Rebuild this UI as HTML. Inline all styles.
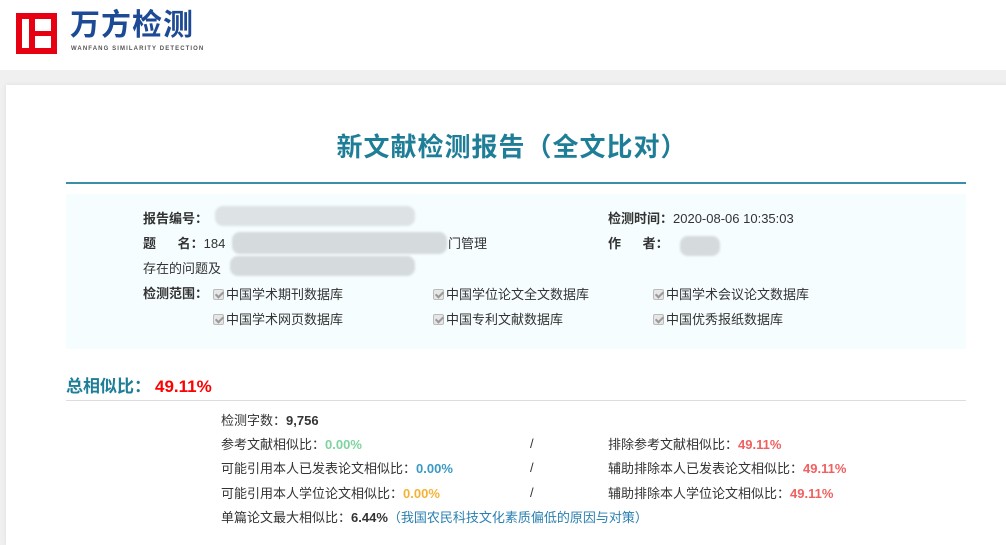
<!DOCTYPE html>
<html><head><meta charset="utf-8"><style>
*{margin:0;padding:0;box-sizing:border-box}
body{width:1006px;height:535px;overflow:hidden;background:#f0f0f0;font-family:"Liberation Sans","Noto Sans CJK SC",sans-serif;font-size:13px;color:#333;position:relative}
.hdr{position:absolute;left:0;top:0;width:1006px;height:70px;background:#fff}
.card{position:absolute;left:6px;top:85px;width:1010px;height:460px;background:#fff;box-shadow:0 0 4px #ddd}
.a{position:absolute;white-space:nowrap}
.b{font-weight:bold}
.cb{display:inline-block;width:11px;height:11px;border:1px solid #bbb;background:#e6e6e6;border-radius:2px;vertical-align:-1px;margin-right:2px;position:relative}
.cb:after{content:"";position:absolute;left:3px;top:0px;width:3px;height:6px;border:solid #999;border-width:0 2px 2px 0;transform:rotate(45deg)}
.blur{position:absolute;background:#dde3e5;border-radius:8px;filter:blur(1px)}
</style></head><body>
<div class="hdr">
 <div class="a" style="left:16px;top:13px;width:41px;height:41px;background:#e60012"></div>
 <div class="a" style="left:22px;top:19px;width:29px;height:29px;background:#fff"></div>
 <div class="a" style="left:29px;top:19px;width:6px;height:29px;background:#e60012"></div>
 <div class="a" style="left:35px;top:31px;width:16px;height:5px;background:#e60012"></div>
 <div class="a b" style="left:70px;top:8px;font-size:30px;color:#1d4a94;letter-spacing:1px;line-height:36px">万方检测</div>
 <div class="a b" style="left:71px;top:46px;font-size:6px;color:#555;letter-spacing:1.1px">WANFANG SIMILARITY DETECTION</div>
</div>
<div class="card"></div>
<div class="a b" style="left:0;width:1024px;text-align:center;top:127px;font-size:26px;color:#1f7e97;letter-spacing:1px">新文献检测报告（全文比对）</div>
<div class="a" style="left:66px;top:182px;width:900px;height:2px;background:#3a8fa6"></div>
<div class="a" style="left:66px;top:194px;width:900px;height:155px;background:#f5fdff"></div>
<div class="a b" style="left:143px;top:208px">报告编号：</div>
<div class="blur" style="left:215px;top:206px;width:200px;height:20px"></div>
<div class="a b" style="left:143px;top:233px">题&nbsp;&nbsp;&nbsp;&nbsp;&nbsp;&nbsp;名：<span style="font-weight:normal">184</span></div>
<div class="blur" style="left:232px;top:232px;width:215px;height:22px;background:#d5dbdd"></div>
<div class="a" style="left:448px;top:233px">门管理</div>
<div class="a" style="left:143px;top:258px">存在的问题及</div>
<div class="blur" style="left:230px;top:256px;width:185px;height:20px;background:#d5dbdd"></div>
<div class="a b" style="left:608px;top:208px">检测时间：<span style="font-weight:normal">2020-08-06 10:35:03</span></div>
<div class="a b" style="left:608px;top:233px">作&nbsp;&nbsp;&nbsp;&nbsp;&nbsp;&nbsp;者：</div>
<div class="blur" style="left:680px;top:236px;width:40px;height:20px;background:#d5dbdd"></div>
<div class="a b" style="left:143px;top:283px">检测范围：</div>
<div class="a" style="left:213px;top:284px"><span class="cb"></span>中国学术期刊数据库</div>
<div class="a" style="left:433px;top:284px"><span class="cb"></span>中国学位论文全文数据库</div>
<div class="a" style="left:653px;top:284px"><span class="cb"></span>中国学术会议论文数据库</div>
<div class="a" style="left:213px;top:309px"><span class="cb"></span>中国学术网页数据库</div>
<div class="a" style="left:433px;top:309px"><span class="cb"></span>中国专利文献数据库</div>
<div class="a" style="left:653px;top:309px"><span class="cb"></span>中国优秀报纸数据库</div>
<div class="a b" style="left:66px;top:372px;font-size:17px;color:#1f7e97">总相似比：<span style="color:#f00;margin-left:4px">49.11%</span></div>
<div class="a" style="left:66px;top:400px;width:900px;height:1px;background:#ddd"></div>
<div class="a" style="left:221px;top:410px">检测字数：<b>9,756</b></div>
<div class="a" style="left:221px;top:434px">参考文献相似比：<b style="color:#7ed3a0">0.00%</b></div>
<div class="a" style="left:221px;top:458px">可能引用本人已发表论文相似比：<b style="color:#3a9ac4">0.00%</b></div>
<div class="a" style="left:221px;top:483px">可能引用本人学位论文相似比：<b style="color:#f5b335">0.00%</b></div>
<div class="a" style="left:221px;top:507px">单篇论文最大相似比：<b>6.44%</b><span style="color:#2a7fb0">（我国农民科技文化素质偏低的原因与对策）</span></div>
<div class="a" style="left:530px;top:436px">/</div>
<div class="a" style="left:530px;top:460px">/</div>
<div class="a" style="left:530px;top:485px">/</div>
<div class="a" style="left:608px;top:434px">排除参考文献相似比：<b style="color:#f06060">49.11%</b></div>
<div class="a" style="left:608px;top:458px">辅助排除本人已发表论文相似比：<b style="color:#f06060">49.11%</b></div>
<div class="a" style="left:608px;top:483px">辅助排除本人学位论文相似比：<b style="color:#f06060">49.11%</b></div>
</body></html>
